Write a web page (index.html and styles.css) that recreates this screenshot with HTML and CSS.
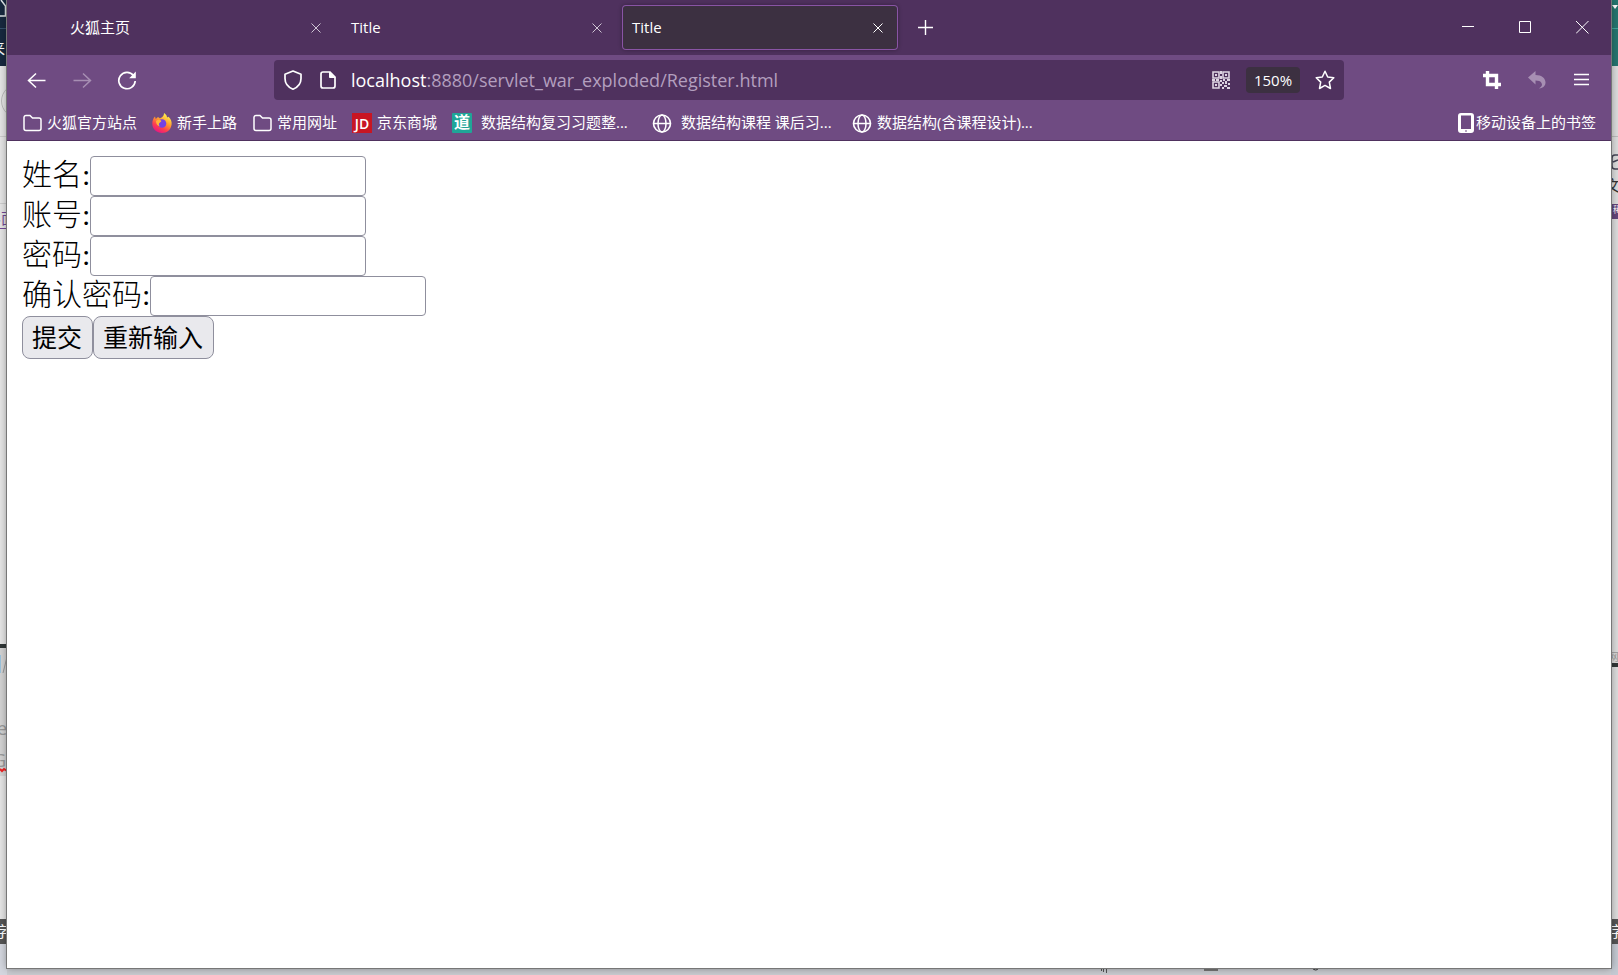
FILE: index.html
```html
<!DOCTYPE html>
<html lang="zh-CN">
<head>
<meta charset="utf-8">
<title>Title</title>
<link rel="stylesheet" href="styles.css">
</head>
<body>
<div class="desktop">
  <aside class="edge edge-left" aria-hidden="true">
    <svg class="edge-art" width="7" height="975" viewBox="0 0 7 975">
      <path d="M0 0h7v66H0z" fill="#17293f"/>
      <path d="M0 28.500h7" stroke="#33506b"/>
      <path d="M1 0l4.500 6v10H0" fill="none" stroke="#dfe5e8" stroke-width="1.500"/>
      <circle cx="18" cy="101" r="16.500" fill="none" stroke="#bbb"/>
      <path d="M0 136.500h7M0 203.500h7" stroke="#ccc"/>
      <path d="M0 644h7v4H0z" fill="#303636"/>
      <path d="M0 648h7v128H0z" fill="#d3d3d3"/>
      <path d="M0 655h1v18H0z" fill="#9cc3dd"/>
      <path d="M3 673l4-16" stroke="#999"/>
      <path d="M0 769l2 2 2-2 3 2" fill="none" stroke="#e22" stroke-width="2"/>
      <path d="M0 919h7v25H0z" fill="#555"/>
      <path d="M0 944h7v31H0z" fill="#d3d6de"/>
    </svg>
    <span class="scrap scrap-nav">来</span>
    <span class="scrap scrap-page">界面</span>
    <span class="scrap scrap-e">e</span>
    <span class="scrap scrap-g">G</span>
    <span class="scrap scrap-foot">字</span>
  </aside>

  <div class="window">
    <header class="tabs">
      <div class="tab"><span>火狐主页</span><button class="close" aria-label="关闭标签页"><svg width="12" height="12" viewBox="0 0 12 12"><path d="M1.500 1.500l9 9m0-9l-9 9"/></svg></button></div>
      <div class="tab"><span>Title</span><button class="close" aria-label="关闭标签页"><svg width="12" height="12" viewBox="0 0 12 12"><path d="M1.500 1.500l9 9m0-9l-9 9"/></svg></button></div>
      <div class="tab active"><span>Title</span><button class="close" aria-label="关闭标签页"><svg width="12" height="12" viewBox="0 0 12 12"><path d="M1.500 1.500l9 9m0-9l-9 9"/></svg></button></div>
      <button class="new-tab" aria-label="新建标签页"><svg width="16" height="16" viewBox="0 0 16 16"><path d="M7.500 0v15M0 7.500h15" stroke-width="1.400"/></svg></button>
      <div class="controls">
        <button aria-label="最小化"><svg width="13" height="13" viewBox="0 0 13 13"><path d="M0 5.500h12"/></svg></button>
        <button aria-label="最大化"><svg width="13" height="13" viewBox="0 0 13 13"><path d="M.5.500h11v11H.5z"/></svg></button>
        <button aria-label="关闭"><svg width="13" height="13" viewBox="0 0 13 13"><path d="M0 0l12.500 12.500m0-12.500L0 12.500"/></svg></button>
      </div>
    </header>

    <nav class="toolbar">
      <div class="nav-buttons">
        <button aria-label="后退"><svg width="20" height="20" viewBox="0 0 20 20"><path d="M1.500 10.500h17M9 3.500l-7.500 7 7.500 7" stroke-width="1.500"/></svg></button>
        <button class="dim" aria-label="前进"><svg width="20" height="20" viewBox="0 0 20 20"><path d="M1.500 10.500h17M11 3.500l7.500 7-7.500 7" stroke-width="1.500"/></svg></button>
        <button aria-label="刷新"><svg width="20" height="20" viewBox="0 0 20 20"><path d="M16.500 5.500A8.200 8.200 0 1 0 18.200 11" stroke-width="1.700"/><path d="M18.800 1.500v6.700h-6.600z" fill="currentColor" stroke="none"/></svg></button>
      </div>
      <div class="urlbar">
        <svg width="20" height="22" viewBox="0 0 20 22"><path d="M10 2l8 3.200v4.300c0 5-3.200 8.800-8 10.700-4.800-1.900-8-5.700-8-10.700V5.200z" stroke-width="1.700" stroke-linejoin="round"/></svg>
        <svg class="soft" width="18" height="20" viewBox="0 0 18 20"><path d="M4 2h7l5 5v9a2 2 0 0 1-2 2H4a2 2 0 0 1-2-2V4a2 2 0 0 1 2-2z" stroke-width="1.700"/><path d="M10.500 2v5.500H16z" fill="currentColor" stroke-width="1"/></svg>
        <a class="url" href="#"><strong>localhost</strong>:8880/servlet_war_exploded/Register.html</a>
        <button class="qr" aria-label="二维码"><svg width="18" height="18" viewBox="0 0 18 18"><path d="M1 1h6v6H1zM11 1h6v6h-6zM1 11h6v6H1z" stroke-width="1.600"/><g fill="currentColor" stroke="none"><path d="M3 3h2v2H3zM13 3h2v2h-2zM3 13h2v2H3zM8 0h2v3H8zM8 5h2v3H8zM0 8h3v2H0zM4 8h3v2H4zM8 9h2v2H8zM11 8h2v2h-2zM15 8h3v2h-3zM10 11h2v2h-2zM13 10h2v3h-2zM16 12h2v2h-2zM8 13h2v2H8zM12 14h3v2h-3zM10 16h2v2h-2zM15 16h3v2h-3z"/></g></svg></button>
        <button class="zoom">150%</button>
        <button aria-label="添加书签"><svg width="20" height="20" viewBox="0 0 20 20"><path d="M10 1.300l2.700 5.700 6.100.8-4.500 4.300 1.200 6.400L10 15.400l-5.500 3.100 1.200-6.400L1.200 7.800 7.300 7z" stroke-width="1.500" stroke-linejoin="round"/></svg></button>
      </div>
      <div class="tools">
        <button aria-label="截图"><svg width="18" height="18" viewBox="0 0 18 18"><path d="M0 4.500h13.500V18M4.500 0v13.500H18" stroke-width="3.400"/></svg></button>
        <button class="dim" aria-label="撤销"><svg width="18" height="18" viewBox="0 0 18 18"><path d="M0 6.500L7.500 0v4C14 4 17.500 7.500 17.500 11.500c0 3-2 5.500-6.500 6 3-2 3.500-3.500 2.500-5.500-1-1.800-3-2.500-6-2.500v4z" fill="currentColor" stroke="none"/></svg></button>
        <button aria-label="菜单"><svg width="18" height="18" viewBox="0 0 18 18"><path d="M1 3.500h15M1 8.500h15M1 13.500h15" stroke-width="1.500"/></svg></button>
      </div>
    </nav>

    <nav class="bookmarks" aria-label="书签">
      <a href="#"><svg width="20" height="20" viewBox="0 0 20 20"><path d="M4 2.500h4l2.500 2.500H17a2 2 0 0 1 2 2v8.500a2 2 0 0 1-2 2H4a2 2 0 0 1-2-2v-11a2 2 0 0 1 2-2z" stroke-width="1.500"/></svg><span>火狐官方站点</span></a>
      <a href="#"><svg class="firefox" width="20" height="20" viewBox="0 0 20 20">
        <defs><linearGradient id="fox" x1=".8" y1=".1" x2=".3" y2="1"><stop offset="0" stop-color="#fff44f"/><stop offset=".4" stop-color="#ff9a2e"/><stop offset=".7" stop-color="#ff3f4f"/><stop offset="1" stop-color="#e31587"/></linearGradient></defs>
        <path d="M12 0c3 2 3 3.500 3 4.500l1.500-.8C19 6 20 8.500 19.600 11.500 19 16.500 15 20 10 20S.5 16.500.3 11C.2 8 1 5.500 3 3.500L3.700 6 6 4l2 1.500C9.500 4.500 12 3.500 12 0z" fill="url(#fox)"/>
        <circle cx="10" cy="10.500" r="4.300" fill="#7542e5"/><path d="M4 8c2-2 4-1.500 5.500 0L8 9.500c-1.500 1-1.500 2.500 0 4-2.500-.5-4-2.500-4-5.500z" fill="#ffb43b"/></svg><span>新手上路</span></a>
      <a href="#"><svg width="20" height="20" viewBox="0 0 20 20"><path d="M4 2.500h4l2.500 2.500H17a2 2 0 0 1 2 2v8.500a2 2 0 0 1-2 2H4a2 2 0 0 1-2-2v-11a2 2 0 0 1 2-2z" stroke-width="1.500"/></svg><span>常用网址</span></a>
      <a href="#"><b class="badge jd">JD</b><span>京东商城</span></a>
      <a href="#"><b class="badge dao">道</b><span class="long"> 数据结构复习习题整...</span></a>
      <a href="#"><svg width="20" height="20" viewBox="0 0 20 20"><circle cx="10" cy="10.500" r="8.500" stroke-width="1.600"/><ellipse cx="10" cy="10.500" rx="4" ry="8.500" stroke-width="1.500"/><path d="M1.500 10.500h17" stroke-width="1.500"/></svg><span class="long"> 数据结构课程 课后习...</span></a>
      <a href="#"><svg width="20" height="20" viewBox="0 0 20 20"><circle cx="10" cy="10.500" r="8.500" stroke-width="1.600"/><ellipse cx="10" cy="10.500" rx="4" ry="8.500" stroke-width="1.500"/><path d="M1.500 10.500h17" stroke-width="1.500"/></svg><span class="long">数据结构(含课程设计)...</span></a>
      <a class="mobile" href="#"><svg width="16" height="20" viewBox="0 0 16 20"><path d="M3 0h10a3 3 0 0 1 3 3v14a3 3 0 0 1-3 3H3a3 3 0 0 1-3-3V3a3 3 0 0 1 3-3zm0 2.500v13.500h10V2.500zM7 17.500v1h2v-1z" fill="currentColor" fill-rule="evenodd" stroke="none"/></svg><span>移动设备上的书签</span></a>
    </nav>

    <main class="page">
      <form>
        <div class="row"><label for="name">姓名:</label><input id="name" type="text"></div>
        <div class="row"><label for="account">账号:</label><input id="account" type="text"></div>
        <div class="row"><label for="password">密码:</label><input id="password" type="password"></div>
        <div class="row"><label for="confirm">确认密码:</label><input id="confirm" type="password"></div>
        <div class="row"><button type="submit">提交</button><button type="reset">重新输入</button></div>
      </form>
    </main>
  </div>

  <aside class="edge edge-right" aria-hidden="true">
    <svg class="edge-art" width="7" height="975" viewBox="0 0 7 975">
      <path d="M0 0h7v66H0z" fill="#25756f"/>
      <path d="M0 28.500h7" stroke="#3fa79d"/>
      <path d="M1 5h6l-3 4z" fill="#fff"/>
      <path d="M0 136.500h7" stroke="#bbb"/>
      <path d="M7 155H4q-3 0-3 3v8q0 3 3 3h3M2 162l5-2" fill="none" stroke="#445" stroke-width="1.500"/>
      <path d="M0 204h7v15H0z" fill="#63457a"/>
      <path d="M0 663h7v4H0z" fill="#303636"/>
      <path d="M0 919h7v25H0z" fill="#555"/>
      <path d="M0 944h7v31H0z" fill="#c4c9d2"/>
    </svg>
    <span class="scrap scrap-doc">文</span>
    <span class="scrap scrap-tag">稀</span>
    <span class="scrap scrap-net">网</span>
    <span class="scrap scrap-word">字</span>
  </aside>

  <footer class="taskbar" aria-hidden="true">
    <svg width="512" height="7" viewBox="0 0 512 7"><path d="M4.500 1v3M7.500 1v4M2.500 1v2" stroke="#555"/><path d="M105 2h14" stroke="#777" stroke-width="2"/><path d="M213 0q4 4 7 0" stroke="#333"/><path d="M331 .5h19M487 .5h12" stroke="#444"/></svg>
  </footer>
</div>
</body>
</html>
```

FILE: styles.css
```css
* { box-sizing: border-box; }

body {
  margin: 0;
  font: 15px/20px "Open Sans", "Noto Sans CJK SC", sans-serif;
  color: #fff;
}

button {
  border: 0;
  padding: 0;
  background: none;
  color: inherit;
  font: inherit;
}

a { color: inherit; text-decoration: none; }

svg {
  display: block;
  flex: none;
  fill: none;
  stroke: currentColor;
}

.desktop {
  display: grid;
  grid-template: minmax(0, 1fr) 7px / 7px minmax(0, 1fr) 7px;
  height: 100vh;
  overflow: hidden;
  background: #e3e3e3;
}

/* Slivers of the windows behind the browser */
.edge {
  position: relative;
  grid-row: 1 / 3;
  overflow: hidden;
  color: #999;
}
.edge-left { grid-column: 1; background: #e5e5e5; }
.edge-right { grid-column: 3; background: #dcdcdc; }
.edge-art, .firefox { stroke: none; }
.scrap { position: absolute; white-space: nowrap; }
.scrap-nav { top: 38px; right: 2px; color: #fff; }
.scrap-page { top: 208px; right: -9px; color: #714896; border-bottom: 1px solid; }
.scrap-e { top: 718px; right: 0; font-size: 18px; }
.scrap-g { top: 750px; right: 1px; font-size: 18px; }
.scrap-foot { top: 921px; right: -3px; color: #fff; }
.scrap-doc { top: 175px; left: -6px; color: #333; }
.scrap-tag { top: 200px; left: 2px; color: #fff; font-size: 9px; }
.scrap-net { top: 647px; left: -3px; font-size: 11px; }
.scrap-word { top: 921px; left: -2px; color: #fff; }

.window {
  grid-area: 1 / 2;
  display: flex;
  flex-direction: column;
  background: #fff;
  box-shadow: 0 0 0 1px #777, 0 0 8px #0006;
  z-index: 1;
}

.tabs {
  display: flex;
  gap: 5px;
  height: 55px;
  padding: 5px 0 5px 53px;
  background: #4f315e;
}
.tab {
  display: flex;
  flex: 0 1 276px;
  align-items: center;
  justify-content: space-between;
  height: 45px;
  padding: 0 14px 0 10px;
}
.tab span { padding-bottom: 2px; }
.active {
  background: #3c3041;
  border-radius: 4px;
  box-shadow: inset 0 0 0 1px #8954a5, 0 0 4px #0005;
}
.close { color: #cfc5d4; }
.active .close { color: #fff; }
.new-tab { padding: 0 15px; }
.controls {
  display: flex;
  gap: 44px;
  align-items: center;
  margin-left: auto;
  padding-right: 22px;
}

.toolbar {
  display: flex;
  height: 50px;
  padding: 5px 20px;
  background: #6f4b82;
}
.nav-buttons { display: flex; gap: 25px; width: 247px; }
.dim { color: #a78fb3; }
.urlbar {
  display: flex;
  flex: 1;
  align-items: center;
  min-width: 0;
  height: 40px;
  padding: 0 9px;
  border-radius: 4px;
  background: #4f315e;
}
.soft { margin-left: 16px; }
.url {
  flex: 1;
  min-width: 0;
  margin-left: 14px;
  overflow: hidden;
  white-space: nowrap;
  font-size: 18px;
  line-height: 26px;
  color: #b39fbe;
}
.url strong { font-weight: 400; color: #fff; }
.qr { color: #ddd3e2; }
.zoom {
  width: 54px;
  height: 26px;
  margin: 0 15px 0 16px;
  border-radius: 4px;
  background: #3c3041;
  font-size: 15px;
}
.tools {
  display: flex;
  gap: 27px;
  justify-content: flex-end;
  width: 247px;
}

.bookmarks {
  display: flex;
  gap: 15px;
  align-items: center;
  height: 36px;
  padding: 0 15px;
  background: #6f4b82;
  border-bottom: 1px solid #4f315e;
}
.bookmarks a {
  display: flex;
  gap: 5px;
  align-items: center;
  white-space: pre;
}
.bookmarks span { padding-bottom: 2px; }
.bookmarks .long { width: 160px; }
.bookmarks .mobile { gap: 2px; margin-left: auto; }
.badge {
  width: 20px;
  height: 20px;
  text-align: center;
}
.jd { background: #c81623; font: 14px/21px "Open Sans", sans-serif; font-weight: 600; }
.dao { border-radius: 1px; background: #1fa597; font-size: 16px; line-height: 18px; }

.page {
  flex: 1;
  padding: 15px;
  color: #000;
}
.row { display: flex; }
.row label {
  font: 300 30px/38px "Liberation Serif", "Noto Sans CJK SC", serif;
}
.row input {
  width: 276px;
  height: 40px;
  padding: 1px 5px;
  border: 1px solid #8f8f9d;
  border-radius: 4px;
  background: #fff;
  font-size: 25px;
}
.row button {
  height: 43px;
  padding: 0 10px 2px 9px;
  border: 1px solid #8f8f9d;
  border-radius: 8px;
  background: #e9e9ed;
  font-size: 25px;
  line-height: 38px;
}

.taskbar {
  grid-area: 2 / 2;
  display: flex;
  justify-content: flex-end;
  background: #c9cbd0;
}
```
